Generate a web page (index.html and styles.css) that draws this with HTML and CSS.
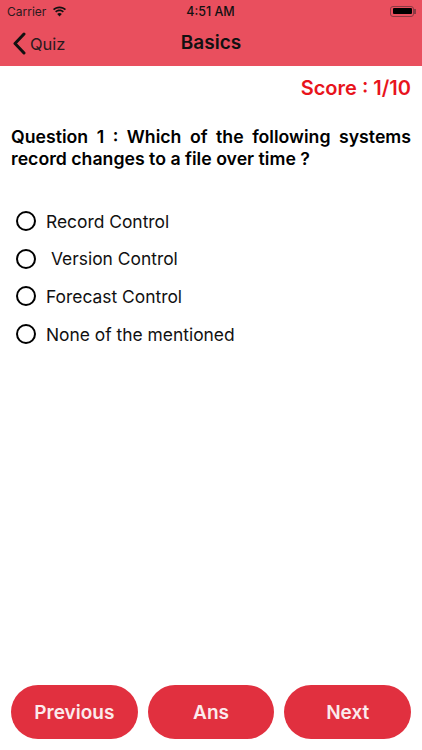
FILE: index.html
```html
<!DOCTYPE html>
<html lang="en">
<head>
    <meta charset="UTF-8">
    <meta name="viewport" content="width=device-width, initial-scale=1.0">
    <title>Basics</title>
    <link rel="stylesheet" href="styles.css">
</head>
<body>
    <div class="app">
        <header class="top-bar">
            <div class="status-bar">
                <div class="status-left">
                    <span>Carrier</span>
                    <svg class="wifi" width="15" height="11" viewBox="0 0 15 11">
                        <path d="M7.5 2.2c2.1 0 4 .8 5.4 2.1l1.1-1.2C12.300 1.500 10 .5 7.500.5S2.700 1.500 1 3.100l1.100 1.200C3.500 3 5.400 2.200 7.500 2.200z" fill="#111"/>
                        <path d="M7.500 5.200c1.300 0 2.400.5 3.300 1.200l1.100-1.200C10.700 4.100 9.200 3.500 7.500 3.500s-3.200.6-4.400 1.700l1.100 1.200c.9-.7 2-1.200 3.300-1.200z" fill="#111"/>
                        <path d="M7.500 10.500l2.300-2.500c-.6-.6-1.400-.9-2.300-.9s-1.700.3-2.300.9z" fill="#111"/>
                    </svg>
                </div>
                <span class="clock">4:51 AM</span>
                <div class="battery"><div class="battery-level"></div><span class="battery-nub"></span></div>
            </div>
            <nav class="nav-bar">
                <div class="back">
                    <svg width="14" height="23" viewBox="0 0 14 23">
                        <path d="M12 2 L3 11.500 L12 21" fill="none" stroke="#111" stroke-width="3" stroke-linecap="round" stroke-linejoin="round"/>
                    </svg>
                    <span>Quiz</span>
                </div>
                <div class="nav-title">Basics</div>
            </nav>
        </header>

        <main class="content">
            <div class="score">Score : 1/10</div>
            <p class="question">Question 1 : Which of the following systems record changes to a file over time ?</p>
            <div class="options">
                <div class="option"><span class="radio"></span><span>Record Control</span></div>
                <div class="option"><span class="radio"></span><span class="indent">Version Control</span></div>
                <div class="option"><span class="radio"></span><span>Forecast Control</span></div>
                <div class="option"><span class="radio"></span><span>None of the mentioned</span></div>
            </div>
        </main>

        <footer class="actions">
            <button class="action-btn">Previous</button>
            <button class="action-btn">Ans</button>
            <button class="action-btn">Next</button>
        </footer>
    </div>
</body>
</html>
```

FILE: styles.css
```css
* {
    box-sizing: border-box;
}
body {
    margin: 0;
    font-family: Inter, "Liberation Sans", Arial, sans-serif;
    background: #fff;
    color: #111;
}
.app {
    display: flex;
    flex-direction: column;
    width: 422px;
    height: 750px;
    overflow: hidden;
}
.top-bar {
    height: 66px;
    background: #e94f5e;
}
.status-bar {
    display: grid;
    grid-template-columns: 1fr auto 1fr;
    align-items: center;
    height: 22px;
    padding: 0 8px 0 7px;
    font-size: 12px;
}
.status-left {
    display: flex;
    align-items: center;
    gap: 6px;
    color: #2a1a1d;
}
.clock {
    font-size: 12.500px;
    font-weight: 500;
}
.battery {
    position: relative;
    justify-self: end;
    width: 24px;
    height: 11px;
    padding: 1.500px;
    border: 1px solid #8a3a44;
    border-radius: 3px;
}
.battery-level {
    height: 100%;
    background: #000;
    border-radius: 1px;
}
.battery-nub {
    position: absolute;
    right: -3px;
    top: 2px;
    width: 2px;
    height: 5px;
    background: #8a3a44;
}
.nav-bar {
    position: relative;
    display: flex;
    align-items: center;
    justify-content: center;
    height: 40px;
}
.back {
    position: absolute;
    left: 12px;
    top: 10px;
    display: flex;
    align-items: center;
    gap: 4px;
    font-size: 16.500px;
    color: #2a1a1d;
}
.nav-title {
    font-size: 19px;
    font-weight: 600;
}
.content {
    flex: 1;
    padding: 10px 11px 0;
}
.score {
    text-align: right;
    font-size: 20px;
    font-weight: 600;
    line-height: 24px;
    color: #e8141c;
}
.question {
    margin: 26px 0 0;
    font-size: 17.700px;
    font-weight: 600;
    line-height: 22px;
    text-align: justify;
    color: #000;
}
.options {
    display: flex;
    flex-direction: column;
    gap: 9.700px;
    margin-top: 37px;
    padding-left: 5px;
}
.option {
    display: flex;
    align-items: center;
    gap: 10px;
    height: 28px;
    font-size: 17.400px;
}
.radio {
    width: 20px;
    height: 20px;
    border: 2.500px solid #000;
    border-radius: 50%;
}
.indent {
    padding-left: 5px;
}
.actions {
    display: flex;
    gap: 10px;
    padding: 0 11px 11px;
}
.action-btn {
    flex: 1;
    height: 54px;
    border: 0;
    border-radius: 27px;
    background: #e1303f;
    color: #fbeaec;
    font-family: inherit;
    font-size: 19px;
    font-weight: 600;
}
```
